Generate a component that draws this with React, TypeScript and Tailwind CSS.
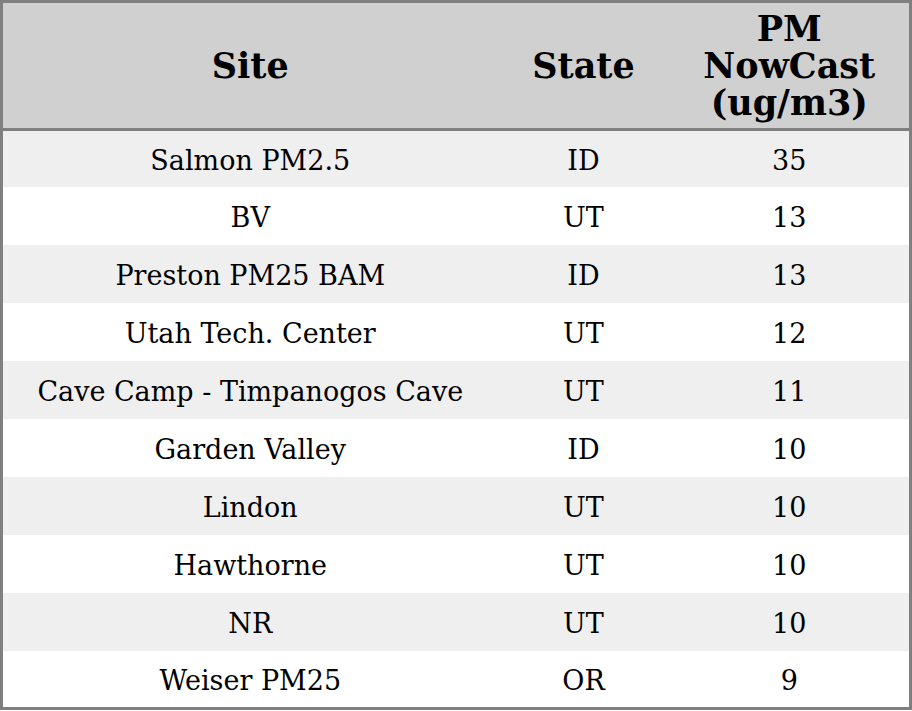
import * as React from 'react';

const rows: [string, string, string][] = [
    ['Salmon PM2.5', 'ID', '35'],
    ['BV', 'UT', '13'],
    ['Preston PM25 BAM', 'ID', '13'],
    ['Utah Tech. Center', 'UT', '12'],
    ['Cave Camp - Timpanogos Cave', 'UT', '11'],
    ['Garden Valley', 'ID', '10'],
    ['Lindon', 'UT', '10'],
    ['Hawthorne', 'UT', '10'],
    ['NR', 'UT', '10'],
    ['Weiser PM25', 'OR', '9'],
];

export default function App() {
    return (
        <div className="h-[711px] w-[912px] bg-white font-['DejaVu_Serif',serif] text-black">
            <table className="w-[912px] border-collapse border-[3px] border-[#808080]">
                <thead>
                    <tr className="h-[128px] border-b-[3px] border-[#808080] bg-[#d0d0d0] text-[35px] leading-[37px] font-bold">
                        <th className="w-[496px] text-center">Site</th>
                        <th className="w-[172px] text-center">State</th>
                        <th className="text-center">
                            PM
                            <br />
                            NowCast
                            <br />
                            (ug/m3)
                        </th>
                    </tr>
                </thead>
                <tbody>
                    {rows.map((r, i) => (
                        <tr
                            key={i}
                            className={
                                'text-center text-[27px] leading-[31px] ' +
                                (i === 0 ? 'h-[57px] ' : 'h-[58px] ') +
                                (i % 2 === 0 ? 'bg-[#efefef]' : 'bg-white')
                            }
                        >
                            <td className="pt-[4px]">{r[0]}</td>
                            <td className="pt-[4px]">{r[1]}</td>
                            <td className="pt-[4px]">{r[2]}</td>
                        </tr>
                    ))}
                </tbody>
            </table>
        </div>
    );
}
